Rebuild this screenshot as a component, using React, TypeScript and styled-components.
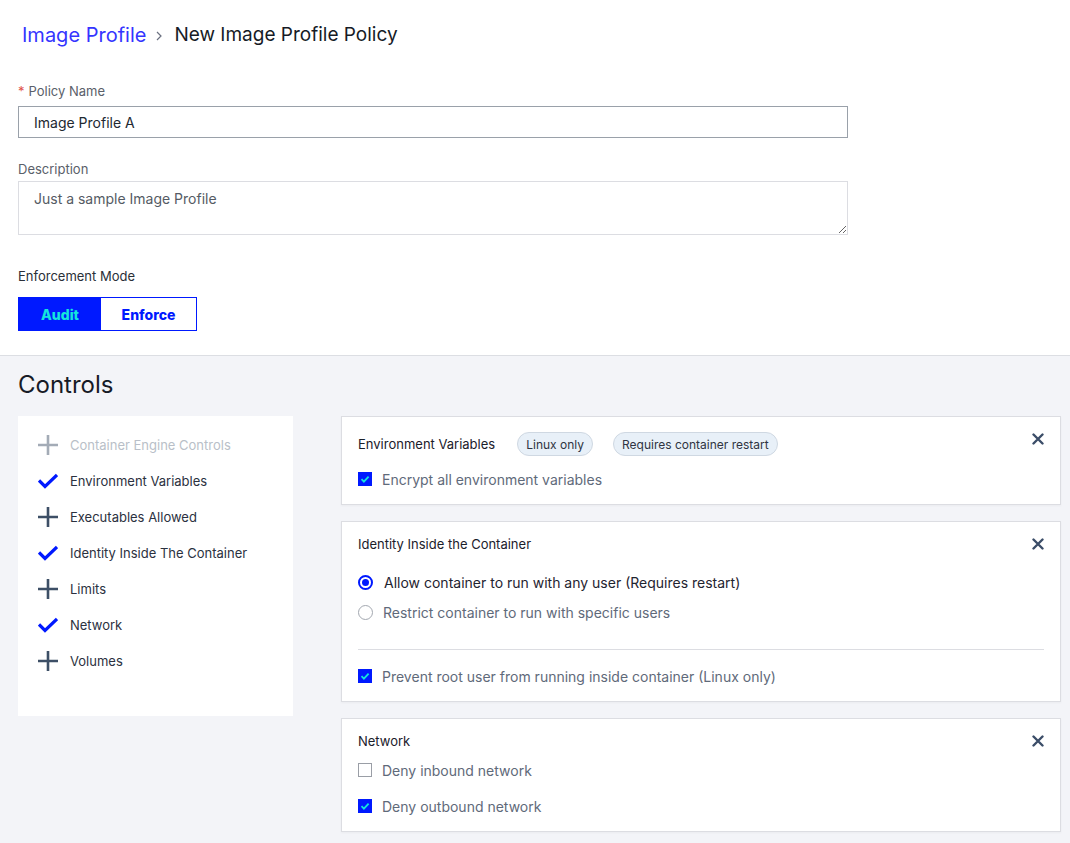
import React from "react";
import styled, { createGlobalStyle } from "styled-components";

const Global = createGlobalStyle`
  html, body { margin: 0; padding: 0; background: #f3f4f8; }
  body { font-family: Inter, "Noto Sans", sans-serif; color: #1f2530; }
  * { box-sizing: border-box; }
`;

const Page = styled.div`
  min-height: 843px;
  display: flex;
  flex-direction: column;
`;

const Top = styled.section`
  background: #fff;
  padding: 21px 18px 24px 18px;
  border-bottom: 1px solid #dcdee3;
`;

const Breadcrumb = styled.nav`
  display: flex;
  align-items: center;
  gap: 8px;
  padding-left: 4px;
  line-height: 28px;
`;

const Crumb = styled.span<{ $link?: boolean }>`
  font-size: ${(p) => (p.$link ? 20 : 19)}px;
  color: ${(p) => (p.$link ? "#3535ff" : "#161b26")};
`;

const Chevron = styled.svg`
  width: 10px;
  height: 10px;
  margin-top: 1px;
  margin-right: 2px;
`;

const Field = styled.div<{ $top: number }>`
  margin-top: ${(p) => p.$top}px;
  width: 830px;
  display: flex;
  flex-direction: column;
`;

const Label = styled.label<{ $gap: number; $dark?: boolean }>`
  font-size: 13px;
  line-height: 18px;
  color: ${(p) => (p.$dark ? "#2a2f38" : "#5a606a")};
  margin-bottom: ${(p) => p.$gap}px;
`;

const Required = styled.span`
  color: #e0524a;
  margin-right: 4px;
`;

const TextInput = styled.input`
  height: 32px;
  border: 1px solid #9aa1aa;
  padding: 0 15px;
  font-family: inherit;
  font-size: 14px;
  color: #222831;
  outline: none;
`;

const TextArea = styled.textarea`
  height: 54px;
  border: 1px solid #dcdde2;
  padding: 8px 15px;
  font-family: inherit;
  font-size: 14px;
  line-height: 18px;
  color: #555b64;
  resize: vertical;
  outline: none;
`;

const Toggle = styled.div`
  display: flex;
  width: 179px;
  height: 34px;
  border: 1px solid #0019ff;
`;

const ToggleButton = styled.button<{ $active?: boolean }>`
  flex: ${(p) => (p.$active ? "0 0 82px" : "1")};
  border: none;
  background: ${(p) => (p.$active ? "#0019ff" : "#fff")};
  color: ${(p) => (p.$active ? "#14e6dc" : "#0019ff")};
  font-family: inherit;
  font-size: 14px;
  font-weight: 800;
  cursor: pointer;
`;

const Controls = styled.section`
  flex: 1;
  background: #f3f4f8;
  padding: 14px 9px 10px 18px;
`;

const Heading = styled.h2`
  margin: 0;
  font-size: 24px;
  line-height: 30px;
  font-weight: 400;
  color: #161b26;
`;

const Layout = styled.div`
  margin-top: 16px;
  display: flex;
  align-items: flex-start;
  gap: 48px;
`;

const Sidebar = styled.ul`
  list-style: none;
  margin: 0;
  width: 275px;
  height: 300px;
  background: #fff;
  padding: 19px 20px;
  display: flex;
  flex-direction: column;
  gap: 16px;
`;

const SideItem = styled.li<{ $disabled?: boolean }>`
  display: flex;
  align-items: center;
  gap: 12px;
  height: 20px;
  font-size: 13px;
  color: ${(p) => (p.$disabled ? "#b9bfc8" : "#2b3140")};
`;

const Cards = styled.div`
  flex: 1;
  display: flex;
  flex-direction: column;
  gap: 16px;
`;

const Card = styled.div`
  background: #fff;
  border: 1px solid #dcdde2;
  box-shadow: 0 1px 2px rgba(0, 0, 0, 0.04);
  padding: 13px 16px 15px 16px;
  display: flex;
  flex-direction: column;
`;

const CardHeader = styled.div<{ $tall?: boolean }>`
  display: flex;
  align-items: center;
  min-height: ${(p) => (p.$tall ? 28 : 18)}px;
  gap: 20px;
`;

const CardTitle = styled.div`
  font-size: 13px;
  line-height: 18px;
  color: #1b202b;
  margin-right: 2px;
`;

const Pill = styled.span`
  height: 24px;
  display: inline-flex;
  align-items: center;
  padding: 0 8px;
  border-radius: 12px;
  background: #e8f0f8;
  border: 1px solid #cfd8e2;
  font-size: 12px;
  color: #2f3442;
`;

const Close = styled.button`
  margin-left: auto;
  align-self: flex-start;
  margin-top: 3px;
  border: none;
  background: none;
  padding: 0;
  width: 12px;
  height: 12px;
  display: flex;
  cursor: pointer;
`;

const Option = styled.label<{ $top: number; $dark?: boolean }>`
  margin-top: ${(p) => p.$top}px;
  display: flex;
  align-items: center;
  gap: 10px;
  height: 20px;
  font-size: 14px;
  color: ${(p) => (p.$dark ? "#1f2430" : "#5f6a7a")};
`;

const Box = styled.span<{ $checked?: boolean }>`
  width: 14px;
  height: 14px;
  flex: 0 0 14px;
  display: flex;
  align-items: center;
  justify-content: center;
  background: ${(p) => (p.$checked ? "#0019ff" : "#fff")};
  border: 1px solid ${(p) => (p.$checked ? "#0019ff" : "#9a9ea6")};
`;

const Radio = styled.span<{ $checked?: boolean }>`
  width: 15px;
  height: 15px;
  flex: 0 0 15px;
  border-radius: 50%;
  border: ${(p) => (p.$checked ? "2px solid #0019ff" : "1px solid #a3a8b0")};
  display: flex;
  align-items: center;
  justify-content: center;
  margin-right: ${(p) => (p.$checked ? 1 : 0)}px;
  &::after {
    content: "";
    display: ${(p) => (p.$checked ? "block" : "none")};
    width: 7px;
    height: 7px;
    border-radius: 50%;
    background: #0019ff;
  }
`;

const Divider = styled.hr`
  margin: 27px 0 0 0;
  border: none;
  border-top: 1px solid #dcdde2;
`;

const PlusIcon = ({ color }: { color: string }) => (
  <svg width="20" height="20" viewBox="0 0 20 20">
    <path d="M10 0v20M0 10h20" stroke={color} strokeWidth="2.6" />
  </svg>
);

const CheckIcon = () => (
  <svg width="20" height="20" viewBox="0 0 20 20">
    <path d="M1 9.5l6 6L19 4" fill="none" stroke="#0019ff" strokeWidth="3.2" strokeLinejoin="miter" />
  </svg>
);

const XIcon = () => (
  <svg width="12" height="12" viewBox="0 0 12 12">
    <path d="M1.5 1.5l9 9M10.5 1.5l-9 9" stroke="#3b4d68" strokeWidth="2.4" strokeLinecap="round" />
  </svg>
);

const Tick = () => (
  <svg width="10" height="10" viewBox="0 0 10 10">
    <path d="M1.5 5.2l2.4 2.4L8.6 2.6" fill="none" stroke="#14e6dc" strokeWidth="1.8" />
  </svg>
);

const Check = ({ checked }: { checked?: boolean }) => (
  <Box $checked={checked}>{checked && <Tick />}</Box>
);

const sideItems: { label: string; on?: boolean; disabled?: boolean }[] = [
  { label: "Container Engine Controls", disabled: true },
  { label: "Environment Variables", on: true },
  { label: "Executables Allowed" },
  { label: "Identity Inside The Container", on: true },
  { label: "Limits" },
  { label: "Network", on: true },
  { label: "Volumes" },
];

export default function App() {
  return (
    <>
      <Global />
      <Page>
        <Top>
          <Breadcrumb>
            <Crumb $link>Image Profile</Crumb>
            <Chevron viewBox="0 0 10 10">
              <path d="M3 1l4 4-4 4" fill="none" stroke="#6b7180" strokeWidth="1.2" />
            </Chevron>
            <Crumb>New Image Profile Policy</Crumb>
          </Breadcrumb>

          <Field $top={33}>
            <Label $gap={6}>
              <Required>*</Required>Policy Name
            </Label>
            <TextInput defaultValue="Image Profile A" />
          </Field>

          <Field $top={22}>
            <Label $gap={3}>Description</Label>
            <TextArea defaultValue="Just a sample Image Profile" />
          </Field>

          <Field $top={32}>
            <Label $gap={12} $dark>
              Enforcement Mode
            </Label>
            <Toggle>
              <ToggleButton $active>Audit</ToggleButton>
              <ToggleButton>Enforce</ToggleButton>
            </Toggle>
          </Field>
        </Top>

        <Controls>
          <Heading>Controls</Heading>
          <Layout>
            <Sidebar>
              {sideItems.map((it) => (
                <SideItem key={it.label} $disabled={it.disabled}>
                  {it.on ? <CheckIcon /> : <PlusIcon color={it.disabled ? "#a3abb6" : "#3d4f66"} />}
                  {it.label}
                </SideItem>
              ))}
            </Sidebar>

            <Cards>
              <Card>
                <CardHeader $tall>
                  <CardTitle>Environment Variables</CardTitle>
                  <Pill>Linux only</Pill>
                  <Pill>Requires container restart</Pill>
                  <Close aria-label="Remove">
                    <XIcon />
                  </Close>
                </CardHeader>
                <Option $top={11}>
                  <Check checked />
                  Encrypt all environment variables
                </Option>
              </Card>

              <Card>
                <CardHeader>
                  <CardTitle>Identity Inside the Container</CardTitle>
                  <Close aria-label="Remove">
                    <XIcon />
                  </Close>
                </CardHeader>
                <Option $top={19} $dark>
                  <Radio $checked />
                  Allow container to run with any user (Requires restart)
                </Option>
                <Option $top={10}>
                  <Radio />
                  Restrict container to run with specific users
                </Option>
                <Divider />
                <Option $top={16}>
                  <Check checked />
                  Prevent root user from running inside container (Linux only)
                </Option>
              </Card>

              <Card>
                <CardHeader>
                  <CardTitle>Network</CardTitle>
                  <Close aria-label="Remove">
                    <XIcon />
                  </Close>
                </CardHeader>
                <Option $top={10}>
                  <Check />
                  Deny inbound network
                </Option>
                <Option $top={16}>
                  <Check checked />
                  Deny outbound network
                </Option>
              </Card>
            </Cards>
          </Layout>
        </Controls>
      </Page>
    </>
  );
}
